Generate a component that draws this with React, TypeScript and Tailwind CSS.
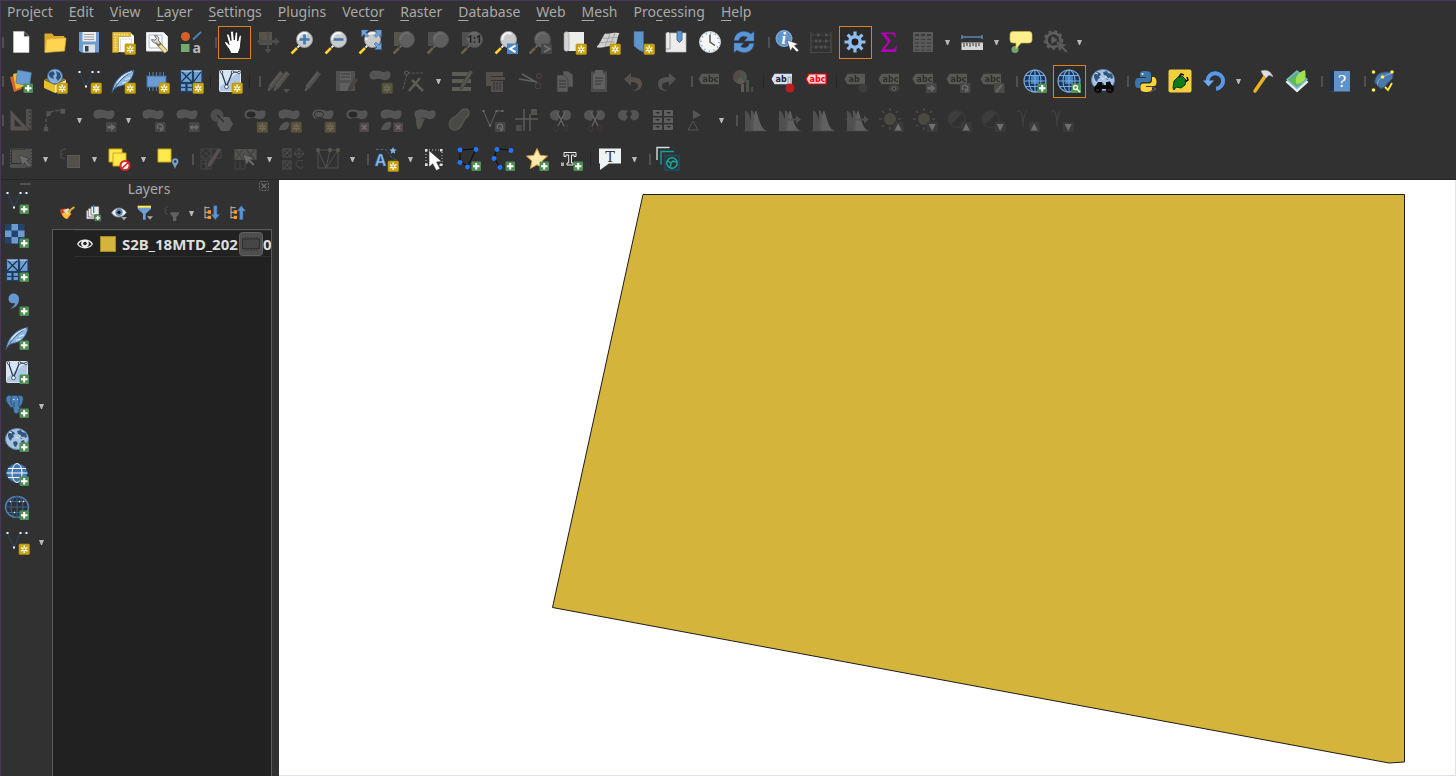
import React from "react";

/* ---------- shared icon parts ---------- */

const Star = () => (
  <g>
    <rect x="14" y="14" width="10.5" height="10.5" rx="1" fill="#c9a40c" stroke="#b08d06" strokeWidth=".6" />
    <path d="M19.2 15.6v7.4M16 17.5l6.4 3.6M16 21.1l6.4-3.6" stroke="#fff" strokeWidth="1.4" />
    <circle cx="19.2" cy="19.3" r="1" fill="#c9a40c" />
  </g>
);
const Plus = () => (
  <g>
    <rect x="14.5" y="14.5" width="9.5" height="9.5" rx="1" fill="#4f8f54" />
    <path d="M19.2 16v6.5M16 19.2h6.5" stroke="#fff" strokeWidth="2" />
  </g>
);
const Cross = () => (
  <g>
    <rect x="14.5" y="14.5" width="9.5" height="9.5" rx="1" fill="#b07a80" />
    <path d="M17 17l4.5 4.5M21.500 17L17 21.500" stroke="#fff" strokeWidth="1.6" />
  </g>
);
const Badge = ({ children, fill = "#777" }: { children?: React.ReactNode; fill?: string }) => (
  <g>
    <rect x="14" y="14" width="10.500" height="10" rx="1" fill={fill} />
    {children}
  </g>
);
const ArrowRight = () => <path d="M15.500 17.800h3.500v-2.300l4.500 3.700-4.500 3.700v-2.300h-3.500z" fill="#eee" />;
const Turn = () => <path d="M17 21c-2-4 1-5.500 3-4.500s2.500 3 .5 4M19 19.500l1 3 2.500-2" stroke="#eee" strokeWidth="1.400" fill="none" />;
const DoubleArrow = () => <path d="M14.500 19.200l3-3v2h3v-2l3.500 3-3.500 3v-2h-3v2z" fill="#eee" />;
const Blob = ({ y = 0, fill = "#a2a69e" }: { y?: number; fill?: string }) => (
  <path transform={`translate(0 ${y})`} d="M1.500 6.500c0-4.500 4-5.500 8-5s5 2 8 1.200 5.500-.5 5 3.500-4 6-8 4.600-5-1-8-.3-5-1-5-4z" fill={fill} />
);
const Lens = ({ back }: { back?: React.ReactNode }) => (
  <g>
    {back}
    <path d="M10 15L1.500 23.500" stroke="#222" strokeWidth="3.500" />
    <path d="M7 18L1.500 23.500" stroke="#fcd23c" strokeWidth="2.600" />
    <path d="M10 15l-2.500 2.500" stroke="#eee" strokeWidth="2" />
    <circle cx="14.500" cy="9.500" r="8" fill="#c9cbcb" stroke="#979a9b" />
    <path d="M8.500 10a6 6 0 0 1 9-6" stroke="#f3f3f3" strokeWidth="2" fill="none" />
  </g>
);
const Tag = ({ text = "abc", fill = "#b8b795", color = "#222" }: { text?: string; fill?: string; color?: string }) => (
  <g>
    <path d="M.5 10L3.500 4.800H21v10.500H3.500z" fill={fill} />
    <text x="4.500" y="13" fontFamily="DejaVu Sans" fontWeight="bold" fontSize="8" fill={color}>{text}</text>
  </g>
);
const Globe = () => (
  <g fill="none" stroke="#7fa9d8" strokeWidth="1.100">
    <circle cx="12" cy="12" r="11" fill="#17365e" />
    <rect x="8" y="7" width="8" height="8" fill="#3f82c8" stroke="none" />
    <ellipse cx="12" cy="12" rx="6" ry="11" />
    <path d="M12 1v22M1 12h22M3 6.500h18M3 17.500h18" />
  </g>
);
const Earth = () => (
  <g>
    <ellipse cx="12" cy="11" rx="11.500" ry="10.500" fill="#a9c4e2" stroke="#5d86b4" />
    <path d="M3 6l3-3 3 1 1 2-2 1 1 2-2 1-1 3-2-2-1-3zM12 3l4-1 1 2 4 1 1 4-2 1-1-2-2 3-2-1 1-3-3-1zM8 14l3-1 2 2-2 4-2-1zM16 13l3-1 1 3-3 3z" fill="#31577f" />
    <path d="M4 4l3 1M10 9l3 1M14 8l4 2" stroke="#dceafa" strokeWidth="1" />
  </g>
);
const Vee = ({ c = "#2a4668" }: { c?: string }) => (
  <g>
    <path d="M2.500 3l6.500 15L15.500 3h6" stroke={c} strokeWidth="1" fill="none" />
    <path d="M1.500 2h2v2h-2zM14.500 2h2v2h-2zM20.500 2h2v2h-2zM8 16.500h2v2H8z" fill="#eef4fb" />
  </g>
);
const Feather = () => (
  <g>
    <path d="M1 23.500C2 15 8 4 23 1c-.5 8-6 15.500-15.500 16.500C4 18.500 2.500 21 1 23.500z" fill="#8fb8e2" stroke="#31567e" strokeWidth=".8" />
    <path d="M2 22C7 13 13 7 22 2" stroke="#31567e" strokeWidth=".9" fill="none" />
    <path d="M6 14C10 8 15 4.500 21 2.500M11 14l5-1M14 10.500l5-1.500" stroke="#dbeafa" strokeWidth="1.200" fill="none" />
  </g>
);
const Grid = () => (
  <g fill="#6f9fd2" stroke="#1f3f63" strokeWidth="1.200">
    <rect x="1.500" y="1.500" width="12" height="12" /><rect x="14.500" y="1.500" width="8.500" height="12" />
    <rect x="1.500" y="14.500" width="5.500" height="4" /><rect x="8" y="14.500" width="5.500" height="4" />
    <rect x="1.500" y="18.500" width="5.500" height="4" /><rect x="8" y="18.500" width="5.500" height="4" />
    <path d="M2 2l11 11M13 2L2 13M22.500 2l-8 11" stroke="#14304f" />
    <path d="M2 2h11M14.500 2h8" stroke="#dcebfa" strokeWidth="1" />
  </g>
);
const VBox = () => (
  <g>
    <rect x="1.500" y="1.500" width="21" height="21" rx="1" fill="#aec8e6" stroke="#dbe5f0" />
    <path d="M2 2h20L2 18z" fill="#d8e5f3" />
    <path d="M3.500 3l5 14.500L14.500 3l7 .5" stroke="#24364d" strokeWidth="1.200" fill="none" />
    <g fill="#fff" stroke="#24364d" strokeWidth=".8"><circle cx="3.500" cy="3" r="1.300" /><circle cx="8.500" cy="17.800" r="1.900" /><circle cx="14.500" cy="3" r="1.300" /><circle cx="21" cy="3.500" r="1.300" /></g>
  </g>
);
const Cursor = ({ x = 0, y = 0, fill = "#fff" }: { x?: number; y?: number; fill?: string }) => (
  <path transform={`translate(${x} ${y})`} d="M0 0l3.500 11 2-3.500 4.500 4.500 1.800-1.800-4.500-4.500L11 4z" fill={fill} stroke="#333" strokeWidth=".5" />
);
const Pencil = ({ x = 0 }: { x?: number }) => (
  <g transform={`translate(${x} 0)`}>
    <path d="M3 22l1-6L15 2l4 3L8 19z" fill="#a89a85" stroke="#666" strokeWidth=".6" />
    <path d="M3 22l.8-3 1.500 1.500z" fill="#ddd" /><path d="M5 17L16 3.500" stroke="#d8d2c0" />
  </g>
);
const Scissors = ({ y = 0 }: { y?: number }) => (
  <g transform={`translate(0 ${y})`} fill="none">
    <path d="M8 4l7 14M16 4L9 18" stroke="#ddd" strokeWidth="1.300" />
    <ellipse cx="7.500" cy="20.500" rx="2" ry="3" stroke="#a04040" /><ellipse cx="17" cy="20" rx="2" ry="3" stroke="#a04040" />
  </g>
);
const Halves = () => (
  <g fill="#a2a69e"><path d="M1 7c0-5 7-6 10-4l-2 3 2 3-3 4C4 12 1 11 1 7z" /><path d="M13 3c4-2 9-1 9 4s-5 6-7 5l-2-3 2-3z" /></g>
);
const Hist = ({ wide = false }: { wide?: boolean }) => (
  <g>
    <path d="M2 23V3c4 0 6 6 7 20z" fill="#8d9c88" /><path d="M8 23V2c4 2 5 12 8 20z" fill="#a4a89e" />
    <path d="M10 23c1-9 1-20 3-20s3 18 11 20z" fill="#ccc" />
    {wide && <path d="M1 11.500l4-4v3h14v-3l5 4-5 4v-3H5v3z" fill="#999" />}
    <path d="M0 23h24" stroke="#888" strokeWidth=".6" />
  </g>
);
const UpDown = ({ up = false }: { up?: boolean }) => (
  <Badge fill="#4c5646"><path d={up ? "M19.200 15.500l3.500 7h-7z" : "M19.200 23l3.500-7h-7z"} fill="#fff" /></Badge>
);
const Sun = () => (
  <g><circle cx="11" cy="11" r="6" fill="#8f8352" /><path d="M11 0v3M11 19v3M0 11h3M19 11h3M3 3l2 2M19 3l-2 2M3 19l2-2" stroke="#8f8352" strokeWidth="1.500" /></g>
);
const Half = () => (
  <g><circle cx="9.500" cy="11" r="8.500" fill="none" stroke="#5a5a5a" /><path d="M4 16.500A7.500 7.500 0 0 1 15 5.500z" fill="#5a5a5a" /></g>
);
const Gamma = () => <path d="M2 4c4-4 6 3 6 15M12 2c-3 4-4 9-4 17" stroke="#666" strokeWidth="1.200" fill="none" />;
const Crosses = () => (
  <g fill="none" stroke="#888" strokeWidth="1.200"><rect x="1" y="2" width="8" height="8" /><path d="M1 2l8 8M9 2l-8 8" /><rect x="1" y="14" width="8" height="8" /><path d="M1 14l8 8M9 14l-8 8" /></g>
);

/* ---------- icon table ---------- */

const icons: Record<string, React.ReactNode> = {
  "New Project": <path d="M4.500 1.500h10.500l5 5V22.500h-15.500z M15 1.500v5h5" fill="#fff" stroke="#c9c9c9" strokeWidth=".6" />,
  "Open Project": <g><path d="M2 22V4h7l2 2.500h10V9" fill="#dca92c" stroke="#dca92c" /><path d="M3.500 9.500l6-1L23 8l-1.500 13L2 22.500z" fill="#ffd451" stroke="#ddb03c" strokeWidth=".7" /></g>,
  "Save Project": <g><path d="M2 2h20v20.500H4l-2-2z" fill="#6d9ccc" /><rect x="5.500" y="2" width="13.500" height="9.500" fill="#e9ebec" /><path d="M7 4.500h10M7 7h10M7 9.500h10" stroke="#999" strokeWidth=".9" /><rect x="6" y="14.500" width="12" height="8" fill="#dfe3e6" /><rect x="8" y="16" width="3.500" height="5.500" fill="#345" /></g>,
  "New Print Layout": <g><path d="M2 2h17l4 4v16H2z" fill="#fff" /><path d="M1.500 2.500h18v4H7.500v16h-6z" fill="#e5bb3a" stroke="#b98d14" strokeWidth=".6" /><path d="M3 4.500h14M4.500 7v15" stroke="#fff3c4" strokeWidth="1.600" strokeDasharray="1 1.500" /><path d="M9.500 9h11v5h-6v8h-5z" fill="none" stroke="#ccc" strokeWidth=".7" /><Star /></g>,
  "Layout Manager": <g><path d="M1.500 2.500h17l4 4V21h-21z" fill="#fff" stroke="#ddd" /><path d="M4 5h13v13H4z" fill="none" stroke="#9fb6d4" /><path d="M12 12l9 10" stroke="#807a45" strokeWidth="4.500" /><path d="M15 15.500l6 6.500" stroke="#f0e0a0" strokeWidth="3" /><path d="M6.500 9.500a4.200 4.200 0 0 0 5 3.500l2 2 2-2-2-2.500c1-3-1-5.500-4-5l2 3-1.500 1.700z" fill="#d3d7d5" stroke="#555" strokeWidth=".8" /></g>,
  "Style Manager": <g><circle cx="6.500" cy="6.500" r="4.500" fill="#d5602e" /><path d="M14 9.500l8-7.500" stroke="#4d7fb5" strokeWidth="2" /><rect x="2" y="14" width="8.500" height="8" fill="#74a96f" /><text x="13.500" y="22.500" fontFamily="Open Sans" fontSize="14" fontWeight="bold" fill="#bbb">a</text></g>,
  "Pan Map": <path d="M8.500 23.500c0-4-5-8-6-11 1.500-2 3.500.5 4.500 2L4.500 5c1-2 2.500-1 3 .5l1.500 5L8.500 2.500c.7-2 2.500-2 3 0l.8 7.500.9-7c.8-1.700 2.500-1.200 2.500.5v7.500l1.500-5c1-1.600 2.300-1 2.200.8L18.500 16c0 3-2 4.500-2 7.500z" fill="#fff" stroke="#151515" strokeWidth=".9" />,
  "Pan to Selection": <g><rect x="3" y="2" width="13" height="13" fill="#b5a467" /><path d="M12 1l3 4h-2v5h6V7.500l5 4-5 4V13h-6v6h2.500L12 23.500 8.500 19H11v-6H5v2.500l-4-4 4-4V10h6V5H9z" fill="#8a8a88" /></g>,
  "Zoom In": <g><Lens /><path d="M14.500 4.500v10M9.500 9.500h10" stroke="#4379b0" strokeWidth="2.600" /></g>,
  "Zoom Out": <g><Lens /><path d="M9.500 9.500h10" stroke="#4379b0" strokeWidth="2.600" /></g>,
  "Zoom Full": <g><Lens /><path d="M3.500 0h7L8 2.500l3 3-2 2-3-3L3.500 7zM23.500 0v7L21 4.500l-3 3-2-2 3-3L16.500 0zM23.500 19.500h-7L19 17l-3-3 2-2 3 3 2.500-2.500z" fill="#6ea3da" stroke="#35618f" strokeWidth=".5" /></g>,
  "Zoom to Selection": <Lens back={<rect x="2" y="2" width="13" height="14" fill="#b5a467" />} />,
  "Zoom to Layer": <Lens back={<rect x="2" y="2" width="13" height="14" fill="#999" />} />,
  "Zoom to Native Resolution": <g><Lens back={<rect x="2" y="2" width="13" height="14" fill="#999" />} /><text x="14.500" y="13" textAnchor="middle" fontFamily="Open Sans" fontSize="10" fontWeight="bold" fill="#000">1:1</text></g>,
  "Zoom Last": <g><Lens /><rect x="13" y="13.500" width="11" height="10.500" fill="#4d85bf" /><path d="M21.500 15.500l-5.500 3.300 5.500 3.300" stroke="#fff" strokeWidth="2" fill="none" /></g>,
  "Zoom Next": <g><Lens /><rect x="13" y="13.500" width="11" height="10.500" fill="#70808f" /><path d="M16 15.500l5.500 3.300-5.500 3.300" stroke="#fff" strokeWidth="2" fill="none" /></g>,
  "New Map View": <g><path d="M6 2h16v19H3z" fill="#ececea" /><path d="M2 4c0-3 5-3 5 0v15c0 3-5 3-5 0z" fill="#d5d5d3" stroke="#999" strokeWidth=".6" /><Star /></g>,
  "New 3D Map View": <g><path d="M9 4c5 1 8-2 14-.5-3 4-1 8-5 12.500-5-2-9 2-17 1 3-3 4-6 8-13z" fill="#cfcfcd" stroke="#eee" strokeWidth=".7" /><path d="M7 8c5 1 9-1 14-.5M4 12.500c5 1 9-2 15-.5M14 3.500L9 16.500M19 3l-5 13" stroke="#999" strokeWidth=".8" fill="none" /><Star /></g>,
  "New Spatial Bookmark": <g><path d="M4 1.500h9.500V22L9 20l-5-4z" fill="#5f94cd" stroke="#416f9f" strokeWidth=".6" /><Star /></g>,
  "Show Spatial Bookmarks": <g><path d="M5 3h17v19H2V4c0-2 3-2 3-1z" fill="#ececea" stroke="#bbb" strokeWidth=".7" /><path d="M6 3v16H2" stroke="#999" fill="none" /><path d="M13 1h5v9l-2.500 2.500L13 10z" fill="#5f94cd" stroke="#33587f" strokeWidth=".8" /></g>,
  "Temporal Controller": <g><circle cx="12" cy="12" r="10.500" fill="#f5f5f3" stroke="#ccc" /><circle cx="12" cy="12" r="9" fill="none" stroke="#7ea8d3" strokeWidth="1.600" strokeDasharray="1.200 3.500" /><path d="M12 4.500V12l5 3.500" stroke="#555" strokeWidth="1.500" fill="none" /></g>,
  Refresh: <g fill="#5b97d7" stroke="#2c62a0" strokeWidth=".5"><path d="M2 10.500C3 4 7 1.500 12 1.500c3 0 5 1 7 2.500l3-2.500V11h-9.500l3-3.500C12 5 8 6 6.500 10.500z" /><path d="M22 13.500c-1 6.500-5 9-10 9-3 0-5-1-7-2.500L2 22.500V13h9.500l-3 3.500c3.500 2.500 7.500 1.500 9-3z" /></g>,
  "Identify Features": <g><circle cx="9" cy="8.500" r="8" fill="#5e95cd" stroke="#9cc3ec" strokeWidth=".8" /><text x="6.500" y="14" fontFamily="Liberation Serif" fontStyle="italic" fontWeight="bold" fontSize="16" fill="#fff">i</text><Cursor x={12} y={10} /></g>,
  "Open Field Calculator": <g stroke="#999" fill="none"><path d="M2 2v21M22 2v21" /><path d="M2 5h20M2 11h20M2 17h20M1 22.500h22" strokeWidth=".7" /><path d="M8 5h3M16 5h3M6 11h6M16 11h3M6 17h3M11 17h7" strokeWidth="3" strokeDasharray="2.500 1.500" /></g>,
  "Processing Toolbox": <g><path d="M12 1.500v21M1.500 12h21M4.600 4.600l14.800 14.800M19.400 4.600L4.600 19.400" stroke="#8fbcf0" strokeWidth="3.200" /><circle cx="12" cy="12" r="5.200" fill="#292929" stroke="#8fbcf0" strokeWidth="3.600" /><circle cx="12" cy="12" r="3.200" fill="#202020" /></g>,
  "Statistical Summary": <path d="M4 2.500h14l.8 5h-1c-.8-2.600-1.800-3.400-4.500-3.400H8.800l5 7-6 8.200h6.500c2.700 0 3.900-1 4.700-3.800h1l-1 6.500H3.800v-1l7-9.200L4 3.500z" fill="#b000b4" />,
  "Open Attribute Table": <g><rect x="2" y="2" width="20" height="20" fill="#b5b5b5" /><path d="M4 5h4M10 5h4M16 5h4" stroke="#555" strokeWidth="2" /><path d="M4 9.500h4M10 9.500h4M16 9.500h4M4 13h4M10 13h4M16 13h4M4 16.500h4M10 16.500h4M16 16.500h4M4 20h4M10 20h4M16 20h4" stroke="#555" strokeWidth="1.200" /></g>,
  "Measure Line": <g><path d="M2 7h20M2 5v4M22 5v4" stroke="#5a85ad" strokeWidth="1.500" /><rect x="1.500" y="12.500" width="21.500" height="7.500" fill="#d5d5d5" /><path d="M4 13v4M7 13v3M10 13v4M13 13v3M16 13v4M19 13v3" stroke="#555" strokeWidth="1.300" /></g>,
  "Show Map Tips": <g><circle cx="6" cy="19.500" r="3.500" fill="#74a56d" /><path d="M4 1.500h16q3 0 3 3V10q0 3-3 3h-8l-5 6V13H4q-3 0-3-3V4.500q0-3 3-3z" fill="#fdf08c" stroke="#c6b54a" strokeWidth=".7" /></g>,
  "Run Feature Action": <g><circle cx="10.500" cy="10" r="7" fill="none" stroke="#c5c5c5" strokeWidth="2.500" /><circle cx="10.500" cy="10" r="8.800" fill="none" stroke="#c5c5c5" strokeWidth="2" strokeDasharray="3 3" /><path d="M8.500 6l6 4-6 4z" fill="#ccc" /><Cursor x={13} y={11} fill="#bbb" /></g>,

  "Data Source Manager": <g><path d="M1 8l9-2 3 14-8 3z" fill="#d8672b" /><path d="M4 5l9-2 3 14-9 3z" fill="#ecc032" /><path d="M8.500 1l14 2.500-2 14L7 14z" fill="#6a9bd0" stroke="#3e6c9e" strokeWidth=".6" /><Plus /></g>,
  "New GeoPackage Layer": <g><path d="M1 10.500l11-4 11 4-11 5.500z" fill="#a07d10" /><circle cx="12" cy="7.500" r="7.500" fill="#86afd9" stroke="#3c668f" /><path d="M6 4l4-2 2 3-2 2 1 3-3-1-2-2zM13 2l4 2 1 4-3 4-2-3 1-3z" fill="#2b4f77" /><path d="M1 11l11 5v8L1 19z" fill="#e5c32c" /><path d="M23 11l-11 5v8l11-5z" fill="#fff08a" /><Star /></g>,
  "New Shapefile Layer": <g><Vee /><Star /></g>,
  "New SpatiaLite Layer": <g><Feather /><Star /></g>,
  "New Scratch Layer": <g><path d="M4.500 3v19M8 3v19M11.500 3v19M15 3v19M18.500 3v19" stroke="#587fa9" strokeWidth="1" /><rect x="2" y="7" width="19" height="11" fill="#6b9bd0" stroke="#3e6c9e" /><Star /></g>,
  "New Mesh Layer": <g><Grid /><Star /></g>,
  "New Virtual Layer": <g><VBox /><Star /></g>,
  "Current Edits": <g><Pencil x={-1} /><Pencil x={5} /><path d="M17 20h7l-3.500 4z" fill="#999" /></g>,
  "Toggle Editing": <Pencil x={2} />,
  "Save Layer Edits": <g><path d="M2 2h19v20H2z" fill="#999" /><path d="M6 3h11v8H6zM6 14h10v8H6z" fill="#ccc" /><path d="M7 5h9M7 8h9" stroke="#555" /><path d="M14 22l1-4 6-9 3 2-6 9z" fill="#9a6a60" stroke="#444" strokeWidth=".5" /></g>,
  "Add Feature": <g><Blob /><Star /></g>,
  "Vertex Tool": <g><path d="M1 20L5 5M6 4h15" stroke="#aaa" strokeDasharray="3 1" /><circle cx="4.500" cy="4" r="2" fill="none" stroke="#ccc" /><path d="M10 11l11 11M18 9L7 22" stroke="#c5bb9a" strokeWidth="2.600" /></g>,
  "Modify Attributes": <g><path d="M1 3h19v4H1zM1 10h19v4H1zM1 18h19v4H1z" fill="#c5c09a" /><path d="M9 21l1-5L19 1l3 2-9 15z" fill="#b5a59a" stroke="#555" strokeWidth=".7" /></g>,
  "Delete Selected": <g><path d="M1 3h17v4H6v10H1z" fill="#a79a78" /><path d="M4 8h16v3H4zM6 12h12v11H6z" fill="#b88a84" /><path d="M9 13v8M12 13v8M15 13v8" stroke="#333" /></g>,
  "Cut Features": <g fill="none"><path d="M0 10l18 3M3 5l14 8" stroke="#ccc" strokeWidth="1.500" /><circle cx="20" cy="7" r="2.500" stroke="#a66" /><circle cx="19" cy="17" r="3" stroke="#a66" /></g>,
  "Copy Features": <g fill="#bbb" stroke="#444" strokeWidth=".6"><path d="M10 2h5l5 4v12H10z" /><path d="M4 6h7l4 4v13H4z" /><path d="M6 12h7M6 15h7M6 18h7" strokeWidth="1.200" /></g>,
  "Paste Features": <g><rect x="4" y="2.500" width="16" height="20.500" fill="#888" /><rect x="6" y="5" width="12" height="15" fill="#ccc" /><rect x="8" y="1" width="8" height="4" fill="#ccc" /><path d="M8 9h8M8 12h8M8 15h6" stroke="#444" strokeWidth="1.200" /></g>,
  Undo: <path d="M3 10l7-6v4c7 0 11 2 11 7s-4 7-9 7c4-2 5-3 5-5 0-3-3-4-7-4v4z" fill="#b29580" />,
  Redo: <path d="M21 10l-7-6v4C7 8 3 10 3 15s4 7 9 7c-4-2-5-3-5-5 0-3 3-4 7-4v4z" fill="#a0a79a" />,
  "Layer Labeling": <Tag />,
  "Layer Diagram": <g><circle cx="8" cy="8" r="7" fill="#8da48a" /><path d="M8 8V1a7 7 0 0 0-6 10z" fill="#b87c70" /><path d="M8 8l-3 6a7 7 0 0 0 8-1z" fill="#ccc08c" /><path d="M9 15h3v8H9z" fill="#ccc08c" /><path d="M14 11h3v12h-3z" fill="#8da48a" /><path d="M19 18h2v5h-2z" fill="#b87c70" /></g>,
  "Pin Labels": <g><Tag text="ab" fill="#cfe3fb" /><rect x="17" y="8" width="3" height="8" rx="1" fill="#ddd" stroke="#555" strokeWidth=".5" /><circle cx="19" cy="19" r="4.500" fill="#b81f1f" /></g>,
  "Highlight Pinned Labels": <g><path d="M1 10L4 5h17v10H4z" fill="#ffd9d9" stroke="#f00" strokeWidth="1.200" /><text x="4.500" y="13" fontFamily="DejaVu Sans" fontWeight="bold" fontSize="8" fill="#f00">abc</text></g>,
  "Toggle Unplaced Labels": <g><Tag text="ab" /><rect x="17" y="8" width="3" height="8" rx="1" fill="#bbb" /><circle cx="19" cy="19" r="4.500" fill="#6a5555" /></g>,
  "Show Hidden Labels": <g><Tag /><ellipse cx="16" cy="19.500" rx="5.500" ry="3.500" fill="#666" /><circle cx="16" cy="19.500" r="2.200" fill="#ccc" /><circle cx="16" cy="19.500" r="1" fill="#111" /></g>,
  "Move Label": <g><Tag /><Badge><ArrowRight /></Badge></g>,
  "Rotate Label": <g><Tag /><Badge><Turn /></Badge></g>,
  "Change Label": <g><Tag /><Badge fill="#8a8565"><path d="M16 23l6-7" stroke="#ddd" strokeWidth="2" /></Badge></g>,
  "Add WMS Layer": <g><Globe /><Plus /></g>,
  "Search Layers": <g><Globe /><rect x="14.500" y="14.500" width="9.500" height="9.500" fill="#4f9a50" /><circle cx="18.500" cy="18.500" r="2" fill="none" stroke="#fff" strokeWidth="1.300" /><path d="M20 20l3 3" stroke="#fff" strokeWidth="1.500" /></g>,
  "Metadata Search": <g><Earth /><g fill="#0a0a0a"><circle cx="7" cy="20" r="4" /><circle cx="19" cy="20" r="4" /><path d="M7 13h4v3h4v-3h4l4 7H3z" /></g><path d="M5 21h3M17 21h3" stroke="#444" /></g>,
  "Python Console": <g><path d="M11 2c-4 0-5 1-5 3v3h6v1H4c-2 0-3 2-3 5s1 5 3 5h2v-3c0-2 1-3 3-3h5c2 0 3-1 3-3V5c0-2-2-3-6-3z" fill="#3a75ab" /><circle cx="8.500" cy="5" r="1" fill="#fff" /><path d="M18 8v3c0 2-1 3.500-3 3.500H9.500c-2 0-3 1-3 3V20c0 2 2 3 5.500 3s6-1 6-3v-2h-6v-1h8c2 0 2.500-2 2.500-4.500S21 8 19.500 8z" fill="#ffd43b" /><path d="M16 17l6 3-6 3" stroke="#666" fill="none" /></g>,
  "Plugin Reloader": <g><rect x=".5" y=".5" width="23" height="23" rx="2" fill="#f3cf3f" /><path d="M5 19l1-7 4-4 4-1 4 4-1 5-4 3-5-1-2 3z" fill="#0f7a1c" stroke="#05360c" strokeWidth="1" /><path d="M11 8l2-3 3 1M17 13l3-2-1-3" stroke="#111" strokeWidth="1.600" fill="none" /></g>,
  "Reload Plugin": <g><path d="M5.500 12A7.800 7.800 0 1 1 14 19.700" fill="none" stroke="#5798ea" strokeWidth="4" /><path d="M1 11.500h11L6.500 17.500z" fill="#6fa9f2" /></g>,
  "Build Tool": <g><path d="M4 22L15 6" stroke="#edb020" strokeWidth="3.500" strokeLinecap="round" /><path d="M10 2c5-2 10 0 12 6-3-2-4-2-5-1l-2 2-3-3z" fill="#ddd" stroke="#999" strokeWidth=".6" /></g>,
  "Resource Sharing": <g strokeLinejoin="round"><path d="M12 4l10.500 9L12 22.500 1.500 13z" fill="#e8efee" stroke="#e8efee" strokeWidth="1.500" /><path d="M12 2l10 8.500-10 9-10-9z" fill="#5ba8a4" stroke="#7cc0bb" strokeWidth="1.500" /><path d="M11 15C9 9 13 3 20 1c2 8-1 14-9 14z" fill="#a0e04c" /><path d="M11 15C5 15 5 11 5.500 8c5 0 6 4 5.500 7z" fill="#5fbd48" /></g>,
  Help: <g><rect x="2" y="2" width="20" height="20.500" fill="#5f92c8" /><path d="M2 2h4v20.500H2z" fill="#1c2e44" /><text x="14" y="18" textAnchor="middle" fontFamily="DejaVu Serif" fontSize="16" fill="#fff">?</text></g>,
  "Geometry Checker": <g><path d="M4 14c-1-6 4-11 10-11s8 0 8 4-4 5-6 8-4 5-7 4 0-4-2-4-2 1-3-1z" fill="#4d78aa" stroke="#2c527f" /><path d="M7 17c-1-4 1-8 5-9l8-4" stroke="#8db4e0" fill="none" /><g fill="#fff04a"><circle cx="2.500" cy="3" r="1.800" /><circle cx="11.500" cy="8" r="1.800" /><circle cx="21" cy="3" r="1.800" /><circle cx="2.500" cy="21" r="1.800" /></g><path d="M14 18l3 3 4-7" stroke="#ffec2e" strokeWidth="1.800" fill="none" /></g>,

  "Advanced Digitizing": <g><path d="M1.500 2v20.500H21z M5.500 11v7.500H13z" fillRule="evenodd" fill="#b89e90" /><path d="M17 1h5.500v21.500L17 18z" fill="#9d9478" /><path d="M20 4h2M20 8h2M20 12h2M20 16h2" stroke="#333" /></g>,
  "Circular String": <g fill="none" stroke="#aaa" strokeWidth="1.300"><path d="M3 20v-8Q5 4 12 2.500h7" strokeDasharray="4 1.500" /><path d="M1.500 19.500h3v3h-3zM4 4h3v3H4zM18 1.500h3.500V5H18z" fill="#aaa" /></g>,
  "Move Feature": <g><Blob /><Badge><ArrowRight /></Badge></g>,
  "Rotate Feature": <g><Blob /><Badge><Turn /></Badge></g>,
  "Scale Feature": <g><Blob /><Badge><DoubleArrow /></Badge></g>,
  "Simplify Feature": <g><circle cx="8" cy="7.500" r="6.500" fill="#8a8d88" /><path d="M11 9h9l4 7-4 7h-8l-4-7z" fill="#a5a9ab" /><path d="M8 7l7 7" stroke="#222" strokeWidth="1.200" /></g>,
  "Add Ring": <g><Blob /><ellipse cx="8" cy="6.500" rx="4.500" ry="3" fill="#1a1a1a" /><Star /></g>,
  "Add Part": <g><Blob /><path d="M2 22c1-6 6-9 9-8s0 8-3 8z" fill="#a2a69e" /><Star /></g>,
  "Fill Ring": <g><Blob /><ellipse cx="8" cy="6.500" rx="4.500" ry="3" fill="#a2a69e" stroke="#222" /><Star /></g>,
  "Delete Ring": <g><Blob /><ellipse cx="8" cy="6.500" rx="4.500" ry="3" fill="#1a1a1a" /><Cross /></g>,
  "Delete Part": <g><Blob /><path d="M2 22c1-6 6-9 9-8s0 8-3 8z" fill="#a2a69e" /><Cross /></g>,
  "Reshape Features": <g><Blob /><path d="M3 9c0 4 0 12 3 12s3-6 6-10z" fill="#a8a482" /></g>,
  "Offset Curve": <path d="M9 8c4-2 4-7 9-7s5 6 1 9-4 12-11 12-8-10 1-14z" fill="#7e847a" stroke="#a9a980" strokeWidth="1.500" />,
  "Reverse Line": <g><Vee c="#ccc" /><Badge><Turn /></Badge></g>,
  "Trim Extend": <g><path d="M0 11h23M9 1v22M15 6v17" stroke="#b9bcb6" strokeWidth="1.500" /><path d="M16 1h6v6h-6z" fill="#aaa36d" /><path d="M1 17h6v6H1z" fill="#a77" /></g>,
  "Split Features": <g><Halves /><Scissors /></g>,
  "Split Parts": <g><Halves /><Scissors /></g>,
  "Merge Features": <Halves />,
  "Merge Attributes": <g><path d="M2 2h9v6H2zM13 2h9v6h-9zM2 9.500h9v5.500H2zM13 9.500h9v5.500h-9zM2 16.500h9v5.500H2zM13 16.500h9v5.500h-9z" fill="#c5c8c2" /><path d="M4 4h5l-2 2zM15 4h5l-2 2zM4 11h5l-2 2zM15 11h5l-2 2zM4 18h5l-2 2zM15 18h5l-2 2z" fill="#222" /></g>,
  "Rotate Point Symbols": <g><path d="M8 2l8 5-8 4z" fill="#aaa" /><path d="M3 22l5-9 5 9z" fill="none" stroke="#aaa" /></g>,
  "Local Histogram": <Hist />,
  "Full Histogram": <Hist wide />,
  "Local Cumulative Cut": <Hist />,
  "Full Cumulative Cut": <Hist wide />,
  "Increase Brightness": <g><Sun /><UpDown up /></g>,
  "Decrease Brightness": <g><Sun /><UpDown /></g>,
  "Increase Contrast": <g><Half /><UpDown up /></g>,
  "Decrease Contrast": <g><Half /><UpDown /></g>,
  "Increase Gamma": <g><Gamma /><UpDown up /></g>,
  "Decrease Gamma": <g><Gamma /><UpDown /></g>,

  "Select Features": <g><rect x="1.500" y="2" width="21" height="18" fill="none" stroke="#aaa" strokeDasharray="2 1" /><rect x="3" y="3" width="13" height="13" fill="#a5a07c" /><path d="M16 2h6v18h-6zM2 17h14v4H2z" fill="#999" /><Cursor x={10} y={8} fill="#eee" /></g>,
  "Select by Value": <g><path d="M8 2C2 2 1 8 5 7c-4 0-3 6 2 4" stroke="#777" strokeWidth="1.500" fill="none" /><rect x="9.500" y="8.500" width="12" height="12" fill="#a59a78" stroke="#c5ba98" /></g>,
  "Deselect Features": <g><path d="M2 2h13v13H2z" fill="#ffe94e" stroke="#cfa80e" /><path d="M6 6h13v13H6z" fill="#ffe94e" stroke="#cfa80e" /><circle cx="18" cy="18.500" r="4.500" fill="#fff" stroke="#d8262c" strokeWidth="2" /><path d="M15 21.500l6-6" stroke="#d8262c" strokeWidth="1.700" /></g>,
  "Select by Location": <g><path d="M2 2h13v13H2z" fill="#ffe94e" stroke="#cfa80e" /><path d="M19 22c-1-4-3-5-3-7.500a3.200 3.200 0 0 1 6.400 0C22.400 17 20 18 19 22z" fill="#76a0c4" /><circle cx="19.200" cy="14.500" r="1.300" fill="#234" /></g>,
  "Edit Mesh": <g><path d="M2 2h10v9H2zM12 2h10v9H12zM2 13h5v9H2zM7 13h5v9H7zM2 17h10M2 2l10 9M12 2L2 11M22 2L12 11" stroke="#777" fill="none" /><path d="M8 21l1-5L19 1l3 2-9 15z" fill="#b5958a" stroke="#555" strokeWidth=".6" /></g>,
  "Select Mesh": <g><path d="M1.500 2h22v11h-22z" fill="#a5a07c" /><path d="M2 2l8 11M10 2L2 13M13 2l9 11M22 2l-9 11M2 14v8h5v-8M7 22h5v-8" stroke="#666" fill="none" strokeWidth="1.200" /><Cursor x={10} y={7} fill="#eee" /></g>,
  "Mesh Elements": <g><Crosses /><path d="M12 7l5-6 5 6-5 4zM17 1v10M12 7h10M21 14c-5-2-9 2-6 5s6 3 6 0" stroke="#888" fill="none" /></g>,
  "Mesh Vertices": <g stroke="#999" fill="none"><path d="M2 3h20v18H2zM2 3l8 18L22 3M14 3l-4 18" /><path d="M1 2h2v2H1zM13 2h2v2h-2zM21 2h2v2h-2z" stroke="#bbb68a" strokeWidth="1.500" /></g>,
  "Text Annotation": <g><path d="M2 2.500h10l3 4M16 9l6 4" stroke="#3a66a0" strokeDasharray="3 1.500" fill="none" /><text x="1" y="18.500" fontFamily="Open Sans" fontWeight="bold" fontSize="16" fill="#8dbdf2" stroke="#33619a" strokeWidth=".5">A</text><path d="M19 0l1.100 2.300 2.500.2-1.900 1.700.5 2.600L19 5.500l-2.200 1.300.5-2.600-1.900-1.700 2.500-.2z" fill="#82b0df" /><Star /></g>,
  "Modify Annotation": <g><rect x="3" y="3" width="16" height="15" fill="none" stroke="#ccc" strokeDasharray="1 2" /><path d="M2 2h2.500v2.500H2zM17 2h2.500v2.500H17zM2 16.500h2.500V19H2zM17 16.500h2.500V19H17z" fill="#ddd" /></g>,
  "Polygon Annotation": <g><path d="M3 3l16-1-8 17-8-4z" fill="none" stroke="#111" strokeWidth="1.200" /><g fill="#1f78ff"><circle cx="3" cy="3" r="2.400" /><circle cx="19" cy="2.500" r="2.400" /><circle cx="3" cy="15.500" r="2.400" /><circle cx="10.500" cy="20" r="2.400" /></g><Plus /></g>,
  "Line Annotation": <g><path d="M20 3L6 2 3 11l6 9" fill="none" stroke="#111" strokeWidth="1.200" /><g fill="#1f78ff"><circle cx="6" cy="2.500" r="2.400" /><circle cx="20" cy="3.500" r="2.400" /><circle cx="3" cy="11.500" r="2.400" /><circle cx="9" cy="20.500" r="2.400" /></g><Plus /></g>,
  "Marker Annotation": <g><path d="M12 1.500l3.200 6.800 7.300.8-5.400 5 1.500 7.300L12 17.800l-6.600 3.600 1.500-7.300-5.400-5 7.300-.8z" fill="#ffe8a8" stroke="#d79a4a" strokeWidth=".9" /><Plus /></g>,
  "Point Text Annotation": <g><path d="M5 5.500h12v4h-2v-1.500h-2.500V16h1.700v2H8v-2h1.700V8H7v1.500H5z" fill="#333" stroke="#eee" strokeWidth="1" /><path d="M2 15.500h3V19H2z" fill="#aaa" /><Plus /></g>,
  "Text Balloon": <g><path d="M1 1.500h22v15H11L2 23v-6.500H1z" fill="#eef3f4" /><text x="12" y="14.500" textAnchor="middle" fontFamily="DejaVu Serif" fontSize="14.500" fill="#3a3a3a">T</text></g>,
  "Map Themes Plugin": <g fill="none" strokeWidth="1.400"><path d="M1 13V.5h12.500" stroke="#cfdfe2" /><path d="M5 17.500V4.500h13" stroke="#15a0a0" /><path d="M9 22.500V8.500h14v14.500H9z" stroke="#1d4f64" /><circle cx="16" cy="16" r="5.200" stroke="#17b0a8" /><path d="M12 14l3 2 2-2 3 1M14 20l1-3" stroke="#17b0a8" /></g>,

  "Add Vector Layer": <g><Vee /><Plus /></g>,
  "Add Raster Layer": <g><path d="M0 0h19.500v19.500H0z" fill="#24446e" /><path d="M6.500 0H13v6.500H6.500zM0 6.500h6.500V13H0zM13 6.500h6.500V13H13zM6.500 13H13v6.500H6.500z" fill="#6d9bd0" /><Plus /></g>,
  "Add Mesh Layer": <g><Grid /><Plus /></g>,
  "Add Delimited Text Layer": <g><path d="M3.500 6.500a5.200 5.200 0 0 1 10.500.5c0 5-3 8.500-9 10 3-2 5-4 5-6C6 12 3.500 10 3.500 6.500z" fill="#6598d0" /><Plus /></g>,
  "Add SpatiaLite Layer": <g><Feather /><Plus /></g>,
  "Add Virtual Layer": <g><VBox /><Plus /></g>,
  "Add PostGIS Layer": <g><path d="M1 5c0-4 4-4 6-3 2-1 4-1 6 0 3-1 6 0 5 4 0 3-2 6-4 7l2 1-2 1v3c-1 2-4 2-5 0l-1-5c-2 1-3 0-4-2-2-2-3-4-3-6z" fill="#4f80b5" stroke="#24476f" strokeWidth=".8" /><path d="M6.500 2.500c-1 3-1 6 .5 9M13 2.500c1.500 3 1.500 6 .5 9M9 8v5" stroke="#26496f" strokeWidth=".9" fill="none" /><path d="M8 5.500h1.500M12 5.500h1" stroke="#cfe2f5" /><Plus /></g>,
  "Add WCS Layer": <g><Earth /><Plus /></g>,
  "Add WFS Layer": <g><ellipse cx="12" cy="11" rx="10.500" ry="9.500" fill="#4378b4" stroke="#274f7e" /><ellipse cx="12" cy="11" rx="5" ry="9.500" fill="none" stroke="#fff" /><path d="M3 6.500h18M1.500 11h21M3 15.500h18" stroke="#fff" strokeWidth="1" /><Plus /></g>,
  "Add Vector Tile Layer": <g><ellipse cx="12" cy="11" rx="11.500" ry="10.500" fill="none" stroke="#4f7fb8" strokeWidth="1.500" /><ellipse cx="12" cy="11" rx="6" ry="10.500" fill="none" stroke="#37608f" /><path d="M1 11h22M3 5.500h18M3 16.500h18M12 1v21" stroke="#37608f" /><path d="M5 5h1v1H5zM14 5h1v1h-1zM18 5h1v1h-1zM9 16h1v1H9z" fill="#fff" stroke="#fff" strokeWidth=".5" /><Plus /></g>,

  "Open Layer Styling": <g><path d="M1 7l8-2 10 8-6 8C6 21 3 13 1 7z" fill="#d2452a" /><path d="M4 13l9-4 5 4-6 8C8 20 6 17 4 13z" fill="#f5c33c" /><path d="M6 8l8-3 4 5-6 4z" fill="#e9e1cd" /><path d="M13 11l10-8" stroke="#e2ae28" strokeWidth="3" /></g>,
  "Add Group": <g fill="#eee" stroke="#555"><path d="M2 8h13v13H2z" /><path d="M5 5h13v13H5z" /><path d="M9 2h12v13H9z" /><path d="M13 0v12" stroke="#3d79b8" strokeWidth="2" /><Plus /></g>,
  "Manage Map Themes": <g><path d="M1 12C5 3 17 2 23 11c-5 9-17 9-22 1z" fill="#f4f6f7" stroke="#8896a0" strokeWidth="1.500" /><circle cx="12" cy="11" r="5.500" fill="#5c88b2" /><circle cx="12" cy="11" r="2.500" fill="#111" /><path d="M15 18h9l-4.500 5z" fill="#aaa" /></g>,
  "Filter Legend": <g><path d="M1 3h20v3L13 13v9H9v-9L1 6z" fill="#6d9ed4" /><path d="M1 1h20v3H1z" fill="#fff04a" /><path d="M15 17h9l-4.500 5z" fill="#aaa" /></g>,
  "Filter by Expression": <g><path d="M8 3C2 2 1 9 5 8c-4 0-3 7 2 5" stroke="#888" strokeWidth="1.500" fill="none" /><path d="M11 11h13v3l-4 4v6h-5v-6l-4-4z" fill="#ccc" /></g>,
  "Expand All": <g><path d="M3 2v18M3 4h7M3 11h5M3 19h5" stroke="#bbb" strokeWidth="1.500" /><path d="M7 8h5v5H7zM7 16h5v5H7z" fill="#f39a2d" /><path d="M16 1h5v13h4l-6.500 8L12 14h4z" fill="#5b95d3" stroke="#2e5f94" /></g>,
  "Collapse All": <g><path d="M3 2v18M3 4h7M3 11h5M3 19h5" stroke="#bbb" strokeWidth="1.500" /><path d="M7 8h5v5H7zM7 16h5v5H7z" fill="#f39a2d" /><path d="M16 22h5V9h4L18.500 1 12 9h4z" fill="#5b95d3" stroke="#2e5f94" /></g>,
};

/* ---------- toolbar widgets ---------- */

type Item = { kind: "icon"; name: string; state?: "off" | "on" | "lit" } | { kind: "drop" | "grip" | "line" };
const on = (...names: string[]): Item[] => names.map((name) => ({ kind: "icon", name }));
const off = (...names: string[]): Item[] => names.map((name) => ({ kind: "icon", name, state: "off" }));
const lit = (name: string): Item[] => [{ kind: "icon", name, state: "lit" }];
const drop: Item = { kind: "drop" };
const grip: Item = { kind: "grip" };
const line: Item = { kind: "line" };

const DropArrow = () => (
  <svg className="block h-[5px] w-[5px]" viewBox="0 0 5 5"><path d="M0 0h5L3 5H2z" fill="#b8b8b8" /></svg>
);

const ToolItem = ({ item }: { item: Item }) => {
  if (item.kind === "icon") {
    const lit = item.state === "lit";
    return (
      <button
        type="button"
        aria-label={item.name}
        disabled={item.state === "off"}
        className={lit ? "ml-px flex h-[33px] w-[33px] shrink-0 items-start bg-[#2b2b2b] pl-1 pt-1 ring-1 ring-inset ring-[#dd811c]" : "flex h-[33px] w-[34px] shrink-0 items-start justify-center pt-1"}
      >
        <svg viewBox="0 0 24 24" className={item.state === "off" ? "h-6 w-6 overflow-visible opacity-30 grayscale-[40%]" : "h-6 w-6 overflow-visible"}>{icons[item.name]}</svg>
      </button>
    );
  }
  if (item.kind === "drop") return <button type="button" aria-label="More" className="flex h-[33px] w-[15px] shrink-0 items-center justify-center"><DropArrow /></button>;
  if (item.kind === "grip") return <span className="flex w-[9px] shrink-0 justify-end"><span className="h-[11px] w-0.5 bg-[#505050]" /></span>;
  return <span className="flex w-[5px] shrink-0 justify-center"><span className="h-[13px] w-px bg-[#262626]" /></span>;
};

const Toolbar = ({ items }: { items: Item[] }) => (
  <div role="toolbar" className="flex h-[39px] items-center overflow-hidden">
    <span className="flex w-1 shrink-0 justify-end"><span className="h-[11px] w-0.5 bg-[#505050]" /></span>
    {items.map((item, i) => <ToolItem key={i} item={item} />)}
  </div>
);

const rows: Item[][] = [
  [
    ...on("New Project", "Open Project", "Save Project", "New Print Layout", "Layout Manager", "Style Manager"), grip,
    ...lit("Pan Map"), ...off("Pan to Selection"), ...on("Zoom In", "Zoom Out", "Zoom Full"),
    ...off("Zoom to Selection", "Zoom to Layer", "Zoom to Native Resolution"), ...on("Zoom Last"), ...off("Zoom Next"),
    ...on("New Map View", "New 3D Map View", "New Spatial Bookmark", "Show Spatial Bookmarks", "Temporal Controller", "Refresh"), grip,
    ...on("Identify Features"), ...off("Open Field Calculator"), ...lit("Processing Toolbox"), ...on("Statistical Summary"),
    ...off("Open Attribute Table"), drop, ...on("Measure Line"), drop, ...on("Show Map Tips"), ...off("Run Feature Action"), drop,
  ],
  [
    ...on("Data Source Manager", "New GeoPackage Layer", "New Shapefile Layer", "New SpatiaLite Layer", "New Scratch Layer", "New Mesh Layer"), line,
    ...on("New Virtual Layer"), line, grip,
    ...off("Current Edits", "Toggle Editing", "Save Layer Edits", "Add Feature", "Vertex Tool"), drop,
    ...off("Modify Attributes", "Delete Selected", "Cut Features", "Copy Features", "Paste Features", "Undo", "Redo"), grip,
    ...off("Layer Labeling", "Layer Diagram"), line, ...on("Pin Labels", "Highlight Pinned Labels"), line,
    ...off("Toggle Unplaced Labels", "Show Hidden Labels", "Move Label", "Rotate Label", "Change Label"), grip,
    ...on("Add WMS Layer"), ...lit("Search Layers"), ...on("Metadata Search"), grip,
    ...on("Python Console", "Plugin Reloader", "Reload Plugin"), drop, ...on("Build Tool", "Resource Sharing"), grip, ...on("Help"), grip, ...on("Geometry Checker"),
  ],
  [
    ...off("Advanced Digitizing", "Circular String"), drop, ...off("Move Feature"), drop,
    ...off("Rotate Feature", "Scale Feature", "Simplify Feature", "Add Ring", "Add Part", "Fill Ring", "Delete Ring", "Delete Part", "Reshape Features", "Offset Curve", "Reverse Line", "Trim Extend", "Split Features", "Split Parts", "Merge Features", "Merge Attributes", "Rotate Point Symbols"), drop, grip,
    ...off("Local Histogram", "Full Histogram", "Local Cumulative Cut", "Full Cumulative Cut", "Increase Brightness", "Decrease Brightness", "Increase Contrast", "Decrease Contrast", "Increase Gamma", "Decrease Gamma"),
  ],
  [
    ...off("Select Features"), drop, ...off("Select by Value"), drop, ...on("Deselect Features"), drop, ...on("Select by Location"), grip,
    ...off("Edit Mesh", "Select Mesh"), drop, ...off("Mesh Elements", "Mesh Vertices"), drop, grip,
    ...on("Text Annotation"), drop, ...on("Modify Annotation", "Polygon Annotation", "Line Annotation", "Marker Annotation", "Point Text Annotation"), line,
    ...on("Text Balloon"), drop, grip, ...on("Map Themes Plugin"),
  ],
];

const menus: [string, string, string][] = [
  ["Pro", "j", "ect"], ["", "E", "dit"], ["", "V", "iew"], ["", "L", "ayer"], ["", "S", "ettings"], ["", "P", "lugins"], ["Vect", "o", "r"],
  ["", "R", "aster"], ["", "D", "atabase"], ["", "W", "eb"], ["", "M", "esh"], ["Pro", "c", "essing"], ["", "H", "elp"],
];

const sources = ["Add Vector Layer", "Add Raster Layer", "Add Mesh Layer", "Add Delimited Text Layer", "Add SpatiaLite Layer", "Add Virtual Layer", "Add PostGIS Layer", "Add WCS Layer", "Add WFS Layer", "Add Vector Tile Layer", "New Shapefile Layer"];
const sourcesWithMenu = ["Add PostGIS Layer", "New Shapefile Layer"];

const PanelIcon = ({ name, dim = false }: { name: string; dim?: boolean }) => (
  <button type="button" aria-label={name} className="flex h-6 w-[26px] shrink-0 items-center justify-center">
    <svg viewBox="0 0 24 24" className={dim ? "h-4 w-4 overflow-visible opacity-30" : "h-4 w-4 overflow-visible"}>{icons[name]}</svg>
  </button>
);

const LayersPanel = () => (
  <section className="flex w-[220px] shrink-0 flex-col">
    <header className="relative flex h-[17px] items-center justify-center">
      <h2 className="pr-[26px] text-[14px] leading-[17px] text-[#a9a9a9]">Layers</h2>
      <button type="button" aria-label="Close panel" className="absolute right-[3px] top-px">
        <svg className="block h-[10px] w-[10px]" viewBox="0 0 10 10" fill="none" stroke="#6a6a6a"><rect x=".5" y=".5" width="9" height="9" rx="1" strokeDasharray="2 1" /><path d="M2.500 2.500l5 5M7.500 2.500l-5 5" strokeWidth="1.300" /></svg>
      </button>
    </header>
    <div className="flex h-8 items-center pl-[2px]">
      <PanelIcon name="Open Layer Styling" />
      <PanelIcon name="Add Group" />
      <PanelIcon name="Manage Map Themes" />
      <PanelIcon name="Filter Legend" />
      <PanelIcon name="Filter by Expression" dim />
      <button type="button" aria-label="More" className="flex h-6 w-[14px] items-center justify-center"><DropArrow /></button>
      <PanelIcon name="Expand All" />
      <PanelIcon name="Collapse All" />
    </div>
    <ul className="flex-1 overflow-hidden border-x border-t border-[#5a5a5a] bg-[#212121]">
      <li className="ml-[21px] flex h-[27px] items-center border-y border-[#2f2f2f]">
        <button type="button" aria-label="Toggle visibility" className="ml-[3px] shrink-0">
          <svg className="block h-4 w-4" viewBox="0 0 16 16"><path d="M.7 8C3.500 3 12.500 3 15.300 8 12.500 13 3.500 13 .7 8z" fill="none" stroke="#eee" strokeWidth="1.300" /><circle cx="8" cy="7.500" r="3.800" fill="#eee" /><circle cx="8" cy="7.500" r="1.800" fill="#222" /></svg>
        </button>
        <span className="ml-[7px] h-4 w-4 shrink-0 border border-[#a58a22] bg-[#d4b43b]" />
        <span className="ml-[6px] w-[117px] shrink-0 overflow-hidden whitespace-nowrap text-[15px] font-bold leading-5 text-[#dedede]">S2B_18MTD_202</span>
        <svg className="block h-6 w-6 shrink-0" viewBox="0 0 24 24"><rect x=".5" y=".5" width="23" height="23" rx="3" fill="#4e4e4e" stroke="#616161" /><path d="M6 5v14M9 5v14M12 5v14M15 5v14M18 5v14" stroke="#2e2e2e" /><rect x="3.500" y="7" width="17" height="9.500" fill="#464646" stroke="#303030" /></svg>
        <span className="text-[15px] font-bold leading-5 text-[#dedede]">0</span>
      </li>
    </ul>
  </section>
);

export default function App() {
  return (
    <div className="relative flex h-screen flex-col overflow-hidden border-l border-t border-[#46365a] bg-[#313131] font-['Noto_Sans',sans-serif]">
      <nav className="flex h-[22px] items-center gap-4 pl-[6px] text-[14px] leading-5 text-[#a9a9a9]">
        {menus.map(([a, key, b]) => (
          <button type="button" key={a + key + b} className="whitespace-nowrap">
            {a}<span className="underline decoration-1 underline-offset-[3px]">{key}</span>{b}
          </button>
        ))}
      </nav>
      <div className="-ml-px">
        {rows.map((items, i) => <Toolbar key={i} items={items} />)}
      </div>
      <main className="-ml-px flex min-h-0 flex-1 border-t border-[#262626]">
        <div role="toolbar" aria-label="Manage layers" className="flex w-[52px] shrink-0 flex-col">
          <span className="ml-5 mt-[3px] h-0.5 w-[11px] shrink-0 bg-[#505050]" />
          {sources.map((name) => (
            <div key={name} className="flex h-[34px] shrink-0 items-center">
              <button type="button" aria-label={name} className="flex h-[34px] w-[34px] items-center justify-center">
                <svg viewBox="0 0 24 24" className="h-6 w-6 overflow-visible">{icons[name]}</svg>
              </button>
              {sourcesWithMenu.includes(name) && (
                <button type="button" aria-label="More" className="flex h-[34px] w-[15px] items-center justify-center"><DropArrow /></button>
              )}
            </div>
          ))}
        </div>
        <LayersPanel />
        <div className="ml-[7px] min-w-0 flex-1 overflow-hidden border-b border-r border-[#e4dff0] bg-white">
          <svg viewBox="0 0 1176 595" className="block w-full">
            <path d="M364 14.500L1125.500 14.500V582L1110 583L273.500 427.500z" fill="#d4b43b" stroke="#1c1c1c" strokeWidth="1" />
          </svg>
        </div>
      </main>
      <svg className="pointer-events-none absolute left-[427px] top-[149px] h-[22px] w-4" viewBox="0 0 16 22"><path d="M1 .5v16.500l3.800-3.200 3.400 6.700 3.800-1.800-3.400-6.700 5-.6z" fill="#fff" stroke="#333" strokeWidth=".6" /></svg>
    </div>
  );
}
